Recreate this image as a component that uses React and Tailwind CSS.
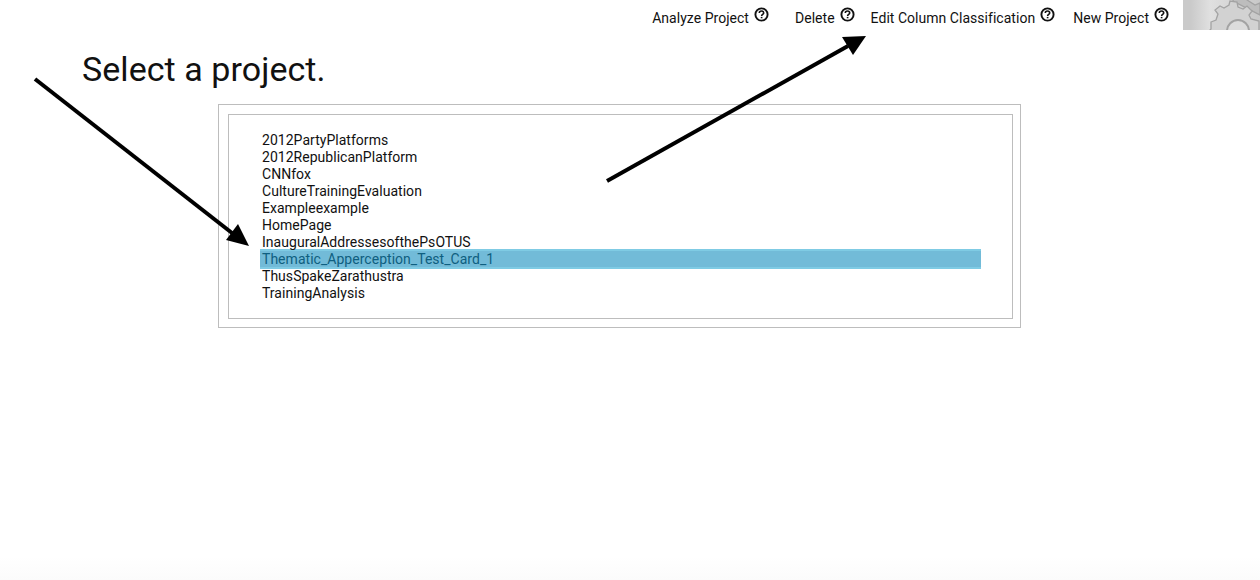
import React from 'react';

const projects = [
  '2012PartyPlatforms',
  '2012RepublicanPlatform',
  'CNNfox',
  'CultureTrainingEvaluation',
  'Exampleexample',
  'HomePage',
  'InauguralAddressesofthePsOTUS',
  'Thematic_Apperception_Test_Card_1',
  'ThusSpakeZarathustra',
  'TrainingAnalysis',
];

const HelpIcon = () => (
  <svg className="ml-[4px] mt-[6px]" width="17" height="17" viewBox="0 0 17 17" fill="none" stroke="#111">
    <circle cx="8.5" cy="8.5" r="6.1" strokeWidth="1.9" />
    <path d="M6.3 7 C6.3 5.7 7.3 5 8.5 5 C9.8 5 10.7 5.8 10.7 6.9 C10.7 8.3 8.6 8.4 8.6 10" strokeWidth="1.6" />
    <path d="M8.6 10.9 V12.3" strokeWidth="1.7" />
  </svg>
);

const NavItem = ({ label, className }) => (
  <div className={`flex items-start ${className}`}>
    <span className="text-[14px] leading-[17px] mt-[10px] tracking-[0.03px] text-[#111]">{label}</span>
    <HelpIcon />
  </div>
);

const Gear = () => (
  <div className="w-[77px] h-[30px] overflow-hidden bg-gradient-to-r from-[#cacaca] from-10% via-[#e0e0e0] via-35% to-[#c8c8c8]">
    <svg width="77" height="30" viewBox="0 0 77 30">
      <g fill="#d2d2d2" stroke="#a3a3a3" strokeWidth="1.3">
        <path d="M50 -6 l14 0 l0 6 l8 5 l5 -2 l0 12 l-27 -14z" fill="#bdbdbd" />
        <path d="M28 22 l5 -2 l2 -6 l-3 -4 l5 -4 l4 2 l5 -3 l1 -4 l7 1 l1 5 l5 2 l4 -3 l5 5 l-3 4 l2 4 l8 2 l0 16 l-50 0 l-1 -5 l3 -3z" />
      </g>
      <circle cx="55" cy="31" r="11" fill="#dcdcdc" stroke="#a3a3a3" strokeWidth="2" />
    </svg>
  </div>
);

const App = () => {
  return (
    <div className="relative w-[1260px] h-[580px] overflow-hidden bg-gradient-to-b from-white from-[96%] to-[#fbfbfb] font-['Roboto',sans-serif]">
      <header className="flex justify-end h-[30px]">
        <NavItem label="Analyze Project" className="mr-[25px]" />
        <NavItem label="Delete" className="mr-[15px]" />
        <NavItem label="Edit Column Classification" className="mr-[17px]" />
        <NavItem label="New Project" className="mr-[13px]" />
        <Gear />
      </header>

      <h1 className="ml-[82px] mt-[18px] text-[34px] leading-[42px] tracking-[0.06px] text-[#111]">Select a project.</h1>

      <div className="ml-[218px] mt-[14px] w-[803px] h-[224px] border border-[#bdbdbd] p-[9px]">
        <div className="w-[785px] h-[205px] border border-[#bdbdbd] pt-[17px] pl-[31px]">
          <ul className="w-[721px]">
            {projects.map((name) => {
              const selected = name.startsWith('Thematic');
              return (
                <li
                  key={name}
                  className={
                    selected
                      ? 'h-[20px] -mt-[2px] -mb-[1px] pl-[2px] text-[14px] leading-[16px] tracking-[0.03px] text-[#0f5f80] bg-[#72bbd8] border-y-2 border-t-[#7fcbe4] border-b-[#7fcbe4]'
                      : 'h-[17px] pl-[2px] text-[14px] leading-[17px] tracking-[0.03px] text-[#111]'
                  }
                >
                  {name}
                </li>
              );
            })}
          </ul>
        </div>
      </div>

      {/* annotation arrows drawn over the page */}
      <svg className="absolute top-0 left-0 pointer-events-none" width="1260" height="580">
        <line x1="35" y1="79" x2="232" y2="233" stroke="#000" strokeWidth="4" />
        <polygon points="249,246 226,240 238,224" fill="#000" />
        <line x1="607" y1="181" x2="848" y2="46" stroke="#000" strokeWidth="4" />
        <polygon points="866,36 853,55 842,37" fill="#000" />
      </svg>
    </div>
  );
};

export default App;
